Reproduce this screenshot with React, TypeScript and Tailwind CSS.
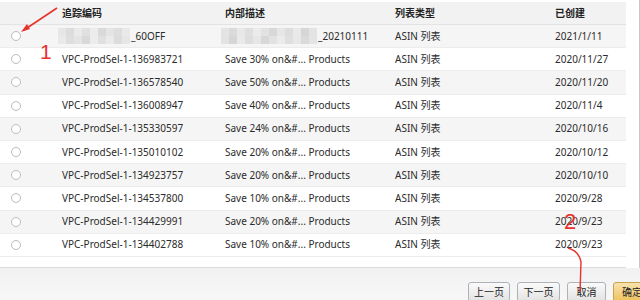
import React from "react";

const rows = [
  { code: "_60OFF", desc: "_20210111", type: "ASIN 列表", date: "2021/1/11", blurred: true },
  { code: "VPC-ProdSel-1-136983721", desc: "Save 30% on&#... Products", type: "ASIN 列表", date: "2020/11/27" },
  { code: "VPC-ProdSel-1-136578540", desc: "Save 50% on&#... Products", type: "ASIN 列表", date: "2020/11/20" },
  { code: "VPC-ProdSel-1-136008947", desc: "Save 40% on&#... Products", type: "ASIN 列表", date: "2020/11/4" },
  { code: "VPC-ProdSel-1-135330597", desc: "Save 24% on&#... Products", type: "ASIN 列表", date: "2020/10/16" },
  { code: "VPC-ProdSel-1-135010102", desc: "Save 20% on&#... Products", type: "ASIN 列表", date: "2020/10/12" },
  { code: "VPC-ProdSel-1-134923757", desc: "Save 20% on&#... Products", type: "ASIN 列表", date: "2020/10/10" },
  { code: "VPC-ProdSel-1-134537800", desc: "Save 10% on&#... Products", type: "ASIN 列表", date: "2020/9/28" },
  { code: "VPC-ProdSel-1-134429991", desc: "Save 20% on&#... Products", type: "ASIN 列表", date: "2020/9/23" },
  { code: "VPC-ProdSel-1-134402788", desc: "Save 10% on&#... Products", type: "ASIN 列表", date: "2020/9/23" },
];

// pixelated mosaic used where the original screenshot was censored
function Mosaic({ shades }: { shades: string[] }) {
  return (
    <div className="flex flex-col -ml-[4px] mr-[1px]">
      <div className="flex">
        {shades.map((s, i) => (
          <div key={i} className={`w-[8px] h-[8px] ${s}`} />
        ))}
      </div>
      <div className="flex">
        {shades
          .slice()
          .reverse()
          .map((s, i) => (
            <div key={i} className={`w-[8px] h-[8px] ${s}`} />
          ))}
      </div>
    </div>
  );
}

const shadesA = [
  "bg-[#e6e6e6]",
  "bg-[#dcdcdc]",
  "bg-[#eaeaea]",
  "bg-[#e0e0e0]",
  "bg-[#ececec]",
  "bg-[#d9d9d9]",
  "bg-[#e4e4e4]",
  "bg-[#dedede]",
  "bg-[#e9e9e9]",
];

const shadesB = [
  "bg-[#e4e4e4]",
  "bg-[#dadada]",
  "bg-[#e8e8e8]",
  "bg-[#dfdfdf]",
  "bg-[#ebebeb]",
  "bg-[#e2e2e2]",
  "bg-[#d8d8d8]",
  "bg-[#e6e6e6]",
  "bg-[#dddddd]",
  "bg-[#e9e9e9]",
  "bg-[#d6d6d6]",
  "bg-[#e3e3e3]",
];

export default function App() {
  return (
    <div className="relative w-[640px] h-[300px] overflow-hidden bg-white text-[10px] text-[#2b2b2b] font-['Noto_Sans','Noto_Sans_CJK_SC',sans-serif]">
      <div className="flex h-[268px]">
        {/* table */}
        <div className="w-[626px] pt-[2px] border-b border-[#dcdcdc]">
          <div className="flex items-center h-[23px] bg-[#f2f2f2] border-b border-[#e3e3e3] font-bold text-[#222]">
            <div className="w-[62px]" />
            <div className="w-[163px]">追踪编码</div>
            <div className="w-[170px]">内部描述</div>
            <div className="w-[160px]">列表类型</div>
            <div className="flex-1">已创建</div>
          </div>
          {rows.map((r, i) => (
            <div
              key={i}
              className={`flex items-center h-[23.2px] border-b border-[#ececec] ${
                i % 2 === 0 ? "bg-[#f5f5f5]" : "bg-white"
              }`}
            >
              <div className="w-[62px] pl-[11px]">
                <div className="w-[10px] h-[10px] rounded-full border border-[#bdbdbd] bg-white" />
              </div>
              <div className="w-[163px] flex items-center">
                {r.blurred && <Mosaic shades={shadesA} />}
                <span>{r.code}</span>
              </div>
              <div className="w-[170px] flex items-center">
                {r.blurred && <Mosaic shades={shadesB} />}
                <span>{r.desc}</span>
              </div>
              <div className="w-[160px]">{r.type}</div>
              <div className="flex-1">{r.date}</div>
            </div>
          ))}
        </div>
        {/* scrollbar track */}
        <div className="w-[14px] border-r border-[#c8c8c8] bg-white" />
      </div>

      {/* footer */}
      <div className="flex gap-[7px] h-[32px] pl-[468px] pt-[14px] bg-gradient-to-b from-[#f1f1f1] to-[#f7f7f7]">
        <button className="w-[42px] h-[20px] shrink-0 rounded-[3px] border border-[#adb1b8] bg-gradient-to-b from-[#fafafa] to-[#e3e3e3] text-[10px] text-[#222]">
          上一页
        </button>
        <button className="w-[43px] h-[20px] shrink-0 rounded-[3px] border border-[#adb1b8] bg-gradient-to-b from-[#fafafa] to-[#e3e3e3] text-[10px] text-[#222]">
          下一页
        </button>
        <button className="w-[39px] h-[20px] shrink-0 rounded-[3px] border border-[#adb1b8] bg-gradient-to-b from-[#fafafa] to-[#e3e3e3] text-[10px] text-[#222]">
          取消
        </button>
        <button className="w-[40px] h-[20px] shrink-0 rounded-[3px] border border-[#c9a24a] bg-gradient-to-b from-[#f8e3ad] to-[#eec25a] text-[10px] text-[#222] text-left pl-[8px]">
          确定
        </button>
      </div>

      {/* red annotations drawn over the screenshot */}
      <svg className="absolute left-0 top-0 pointer-events-none" width="640" height="300">
        <line x1="57" y1="8" x2="24" y2="30" stroke="#e8322b" strokeWidth="1.6" />
        <polygon points="21,32 27,24 30,29" fill="#e8322b" />
        <path d="M568 248 Q579 251 581 262 L580 292" stroke="#e8322b" strokeWidth="1.4" fill="none" />
      </svg>
      <div className="absolute left-[40px] top-[41px] text-[21px] leading-none text-[#e8322b] font-['Liberation_Sans',sans-serif]">
        1
      </div>
      <div className="absolute left-[564px] top-[211px] text-[22px] leading-none text-[#e8322b] font-['Liberation_Sans',sans-serif]">
        2
      </div>
    </div>
  );
}
